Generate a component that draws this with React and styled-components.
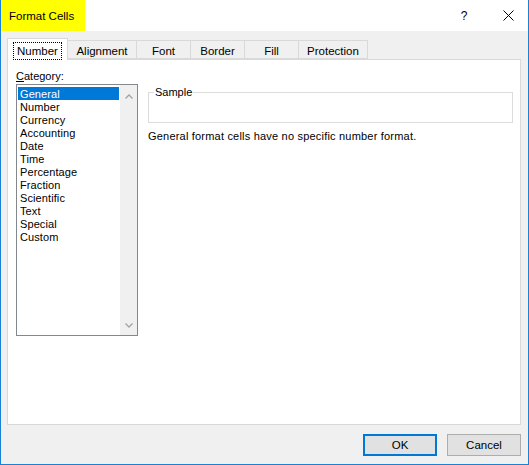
import React from "react";
import styled, { createGlobalStyle } from "styled-components";

const GlobalStyle = createGlobalStyle`
  html, body {
    margin: 0;
    padding: 0;
    background: #ffffff;
  }
  * {
    box-sizing: border-box;
  }
`;

const Window = styled.div`
  width: 529px;
  height: 465px;
  display: flex;
  flex-direction: column;
  background-color: #f0f0f0;
  border: 1px solid #1a82d6;
  border-top: none;
  font-family: "Liberation Sans", Arial, sans-serif;
  color: #000;
`;

const TitleBar = styled.div`
  height: 31px;
  flex-shrink: 0;
  display: flex;
  align-items: stretch;
  background-color: #ffffff;
`;

const Title = styled.div`
  display: flex;
  align-items: center;
  padding: 0 11px 0 8px;
  background-color: #ffff00;
  font-size: 11.5px;
`;

const Spacer = styled.div`
  flex: 1;
`;

const TitleButton = styled.div`
  width: 44px;
  display: flex;
  align-items: center;
  justify-content: center;
  font-size: 12px;
`;

const TitleButtons = styled.div`
  display: flex;
  padding-right: 0;
  margin-right: -2px;
`;

const Body = styled.div`
  flex: 1;
  display: flex;
  flex-direction: column;
  padding: 7px 7px 8px 6px;
`;

const TabRow = styled.div`
  height: 21px;
  display: flex;
  align-items: flex-end;
  position: relative;
  z-index: 1;
`;

const Tab = styled.div`
  width: ${(p) => p.$w}px;
  height: ${(p) => (p.$active ? 22 : 19)}px;
  margin-left: ${(p) => (p.$first ? 0 : -1)}px;
  margin-bottom: ${(p) => (p.$active ? -1 : 0)}px;
  display: flex;
  align-items: ${(p) => (p.$active ? "flex-start" : "center")};
  justify-content: center;
  padding-top: ${(p) => (p.$active ? 3 : 2)}px;
  background-color: ${(p) => (p.$active ? "#ffffff" : "#f0f0f0")};
  border: 1px solid #d9d9d9;
  border-bottom: ${(p) => (p.$active ? "none" : "1px solid #d9d9d9")};
  font-size: 11.5px;
  position: relative;
  z-index: ${(p) => (p.$active ? 2 : 1)};
`;

const FocusBox = styled.span`
  border: 1px dotted #000;
  padding: 1px 3px 0;
  line-height: 15px;
`;

const Panel = styled.div`
  flex: 1;
  background-color: #ffffff;
  border: 1px solid #d9d9d9;
  display: flex;
  gap: 10px;
  padding: 10px 7px 0 8px;
`;

const LeftColumn = styled.div`
  display: flex;
  flex-direction: column;
`;

const Label = styled.div`
  font-size: 11px;
  line-height: 13px;
  margin-bottom: 1px;
`;

const ListBox = styled.div`
  width: 122px;
  height: 252px;
  border: 1px solid #828790;
  display: flex;
  padding: 2px 0 0 1px;
`;

const Items = styled.div`
  flex: 1;
  display: flex;
  flex-direction: column;
  padding-right: 1px;
`;

const Item = styled.div`
  height: 13px;
  line-height: 14px;
  font-size: 11px;
  letter-spacing: 0.1px;
  padding-left: 2px;
  background-color: ${(p) => (p.$selected ? "#0078d7" : "transparent")};
  color: ${(p) => (p.$selected ? "#ffffff" : "#000000")};
  white-space: nowrap;
`;

const ScrollBar = styled.div`
  width: 17px;
  margin-top: -2px;
  background-color: #f0f0f0;
  display: flex;
  flex-direction: column;
  justify-content: space-between;
`;

const ScrollArrow = styled.div`
  height: 17px;
  display: flex;
  align-items: ${(p) => (p.$down ? "flex-start" : "flex-end")};
  justify-content: center;
  padding: ${(p) => (p.$down ? "5px 0 0" : "0 0 3px")};
`;

const RightColumn = styled.div`
  flex: 1;
  display: flex;
  flex-direction: column;
  padding-top: 22px;
`;

const Group = styled.div`
  height: 31px;
  border: 1px solid #dcdcdc;
  position: relative;
`;

const Legend = styled.span`
  position: absolute;
  top: -7px;
  left: 5px;
  padding: 0 1px;
  background-color: #ffffff;
  font-size: 11px;
  line-height: 13px;
`;

const Description = styled.div`
  margin-top: 6px;
  font-size: 11px;
  line-height: 14px;
  letter-spacing: 0.2px;
`;

const Footer = styled.div`
  display: flex;
  justify-content: flex-end;
  gap: 10px;
  margin-top: 9px;
`;

const Button = styled.button`
  width: 74px;
  height: 22px;
  margin: 0;
  padding: 0;
  background-color: #e1e1e1;
  border: ${(p) => (p.$default ? "2px solid #0078d7" : "1px solid #adadad")};
  font-family: "Liberation Sans", Arial, sans-serif;
  font-size: 11.5px;
  color: #000;
`;

const tabs = [
  { label: "Number", w: 61 },
  { label: "Alignment", w: 70 },
  { label: "Font", w: 55 },
  { label: "Border", w: 55 },
  { label: "Fill", w: 55 },
  { label: "Protection", w: 70 },
];

const categories = [
  "General",
  "Number",
  "Currency",
  "Accounting",
  "Date",
  "Time",
  "Percentage",
  "Fraction",
  "Scientific",
  "Text",
  "Special",
  "Custom",
];

function Chevron({ down }) {
  return (
    <svg width="8" height="5" viewBox="0 0 8 5">
      <path
        d={down ? "M0.5 0.5 L4 4 L7.5 0.5" : "M0.5 4.5 L4 1 L7.5 4.5"}
        fill="none"
        stroke="#a3a3a3"
        strokeWidth="1.3"
      />
    </svg>
  );
}

function CloseIcon() {
  return (
    <svg width="11" height="11" viewBox="0 0 11 11">
      <path d="M0.5 0.5 L10.5 10.5 M10.5 0.5 L0.5 10.5" stroke="#000" strokeWidth="1" />
    </svg>
  );
}

export default function App() {
  return (
    <>
      <GlobalStyle />
      <Window>
        <TitleBar>
          <Title>Format Cells</Title>
          <Spacer />
          <TitleButtons>
            <TitleButton>?</TitleButton>
            <TitleButton>
              <CloseIcon />
            </TitleButton>
          </TitleButtons>
        </TitleBar>
        <Body>
          <TabRow>
            {tabs.map((t, i) => (
              <Tab key={t.label} $w={t.w} $first={i === 0} $active={i === 0}>
                {i === 0 ? <FocusBox>{t.label}</FocusBox> : t.label}
              </Tab>
            ))}
          </TabRow>
          <Panel>
            <LeftColumn>
              <Label>
                <u>C</u>ategory:
              </Label>
              <ListBox>
                <Items>
                  {categories.map((c, i) => (
                    <Item key={c} $selected={i === 0}>
                      {c}
                    </Item>
                  ))}
                </Items>
                <ScrollBar>
                  <ScrollArrow>
                    <Chevron />
                  </ScrollArrow>
                  <ScrollArrow $down>
                    <Chevron down />
                  </ScrollArrow>
                </ScrollBar>
              </ListBox>
            </LeftColumn>
            <RightColumn>
              <Group>
                <Legend>Sample</Legend>
              </Group>
              <Description>General format cells have no specific number format.</Description>
            </RightColumn>
          </Panel>
          <Footer>
            <Button $default>OK</Button>
            <Button>Cancel</Button>
          </Footer>
        </Body>
      </Window>
    </>
  );
}
